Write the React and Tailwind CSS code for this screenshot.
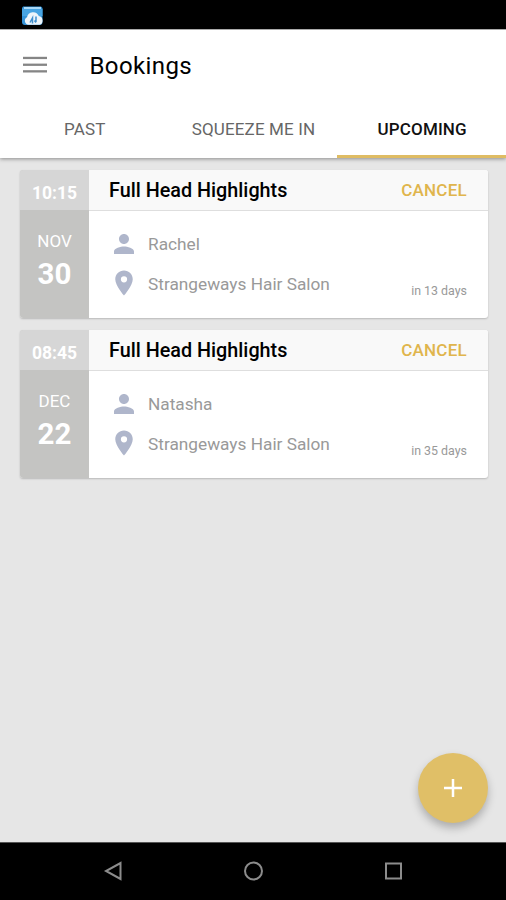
import React from "react";
import { MdPerson, MdLocationOn } from "react-icons/md";

const TABS = ["PAST", "SQUEEZE ME IN", "UPCOMING"];

const BOOKINGS = [
  { id: 1, time: "10:15", month: "NOV", day: "30", service: "Full Head Highlights", client: "Rachel", place: "Strangeways Hair Salon", due: "in 13 days" },
  { id: 2, time: "08:45", month: "DEC", day: "22", service: "Full Head Highlights", client: "Natasha", place: "Strangeways Hair Salon", due: "in 35 days" },
];

function StatusBar() {
  return (
    <div className="h-[29px] shrink-0 bg-black pl-[21px] pt-[5px]">
      <svg width="22" height="21" viewBox="0 0 22 21">
        <path d="M2 1.500h18l1.500 1.500v14a3 3 0 0 1-3 3H4a3 3 0 0 1-3-3V3z" fill="#3593d8" />
        <path d="M3 2h17v2H3z" fill="#a9d8f6" />
        <path d="M1 4h20.500v7H1z" fill="#47a4e2" />
        <path d="M7.500 19.800a4 4 0 0 1-1.500-7.500 6.200 6.200 0 0 1 11.800-1.200 4.500 4.500 0 0 1 .7 8.700z" fill="#eef5fa" />
        <path d="M9 17.500 11.500 13v5.500M15 11.500v5.500M13.500 15.500l1.500 2" stroke="#3f8fce" strokeWidth="1.500" fill="none" />
      </svg>
    </div>
  );
}

function Header() {
  return (
    <header className="relative z-10 h-[129px] shrink-0 bg-white border-t border-[#aaa] shadow-[0_1px_4px_rgba(0,0,0,0.4)] flex flex-col">
      <div className="h-[70px] flex items-center pl-[23px]">
        <svg width="24" height="18" viewBox="0 0 24 18" className="mb-px" fill="#858585">
          <rect y="0.800" width="24" height="2.300" />
          <rect y="7.600" width="24" height="2.300" />
          <rect y="14.200" width="24" height="2.300" />
        </svg>
        <h1 className="ml-[42.500px] pt-px text-[24px] tracking-[0.400px] text-black">Bookings</h1>
      </div>
      <nav className="flex-1 grid grid-cols-3 text-[17px] tracking-[0.150px]">
        {TABS.map(tab => (
          <button key={tab}
            className={tab === "UPCOMING"
              ? "border-b-[3px] border-[#dfbc63] pt-[5px] pl-px font-medium text-[#111]"
              : "border-b-[3px] border-transparent pt-[5px] pl-px text-[#666]"}>
            {tab}
          </button>
        ))}
      </nav>
    </header>
  );
}

function BookingCard({ booking }) {
  return (
    <article className="h-[148px] flex rounded-[3px] overflow-hidden bg-white shadow-[0_1px_2px_rgba(0,0,0,0.2)]">
      <div className="w-[69px] shrink-0 bg-[#c4c4c2] text-white text-center flex flex-col">
        <div className="h-10 bg-[#d6d6d6] pt-[3px] text-[17.500px] leading-10 font-bold">{booking.time}</div>
        <div className="mt-[21px] text-[17px] leading-5">{booking.month}</div>
        <div className="mt-[6px] text-[29.500px] leading-[34px] font-bold">{booking.day}</div>
      </div>
      <div className="flex-1 flex flex-col">
        <div className="h-[41px] shrink-0 flex items-center justify-between bg-[#f9f9f9] border-b border-[#dedede] pl-5 pr-[21px] pt-[2px]">
          <h2 className="text-[19.800px] font-medium text-black">{booking.service}</h2>
          <button className="text-[17px] font-medium tracking-[0.250px] text-[#e0b54d]">CANCEL</button>
        </div>
        <div className="flex-1 flex items-end justify-between pl-[19.500px] pr-[21px]">
          <div className="self-start pt-[18px] flex flex-col gap-[9px] text-[17.250px] text-[#999]">
            <div className="h-[30px] flex items-center gap-[9.500px]">
              <MdPerson size={30} className="text-[#afb6cb]" />
              <span className="pt-[2px]">{booking.client}</span>
            </div>
            <div className="h-[30px] flex items-center gap-[9.500px]">
              <MdLocationOn size={30} className="text-[#afb6cb]" />
              <span className="pt-[3px]">{booking.place}</span>
            </div>
          </div>
          <span className="pb-[17px] text-[12.400px] text-[#999]">{booking.due}</span>
        </div>
      </div>
    </article>
  );
}

function NavBar() {
  return (
    <div className="h-[58px] shrink-0 bg-black border-t border-[#555] pb-[2px] flex items-center justify-center gap-[120px]">
      <svg width="20" height="20" viewBox="0 0 20 20" fill="none" stroke="#8c8c8c" strokeWidth="2">
        <path d="M17.500 2v16L3 10z" />
      </svg>
      <svg width="20" height="20" viewBox="0 0 20 20" fill="none" stroke="#8c8c8c" strokeWidth="2">
        <circle cx="10.500" cy="10" r="8.500" />
      </svg>
      <svg width="20" height="20" viewBox="0 0 20 20" fill="none" stroke="#8c8c8c" strokeWidth="2">
        <rect x="3" y="2.500" width="15" height="15" />
      </svg>
    </div>
  );
}

export default function App() {
  return (
    <div className="w-[506px] h-[900px] flex flex-col overflow-hidden bg-[#e6e6e6] font-['Roboto',sans-serif]">
      <StatusBar />
      <Header />
      <main className="relative flex-1 flex flex-col gap-3 pt-3 pl-5 pr-[18px]">
        {BOOKINGS.map(b => (
          <BookingCard key={b.id} booking={b} />
        ))}
        <button className="absolute right-[18px] bottom-[19.500px] size-[70px] rounded-full bg-[#e0bf67] flex items-center justify-center shadow-[0_5px_8px_rgba(0,0,0,0.25)]">
          <svg width="18" height="18" viewBox="0 0 18 18" stroke="#fff" strokeWidth="2.500">
            <path d="M9 0v18M0 9h18" />
          </svg>
        </button>
      </main>
      <NavBar />
    </div>
  );
}
